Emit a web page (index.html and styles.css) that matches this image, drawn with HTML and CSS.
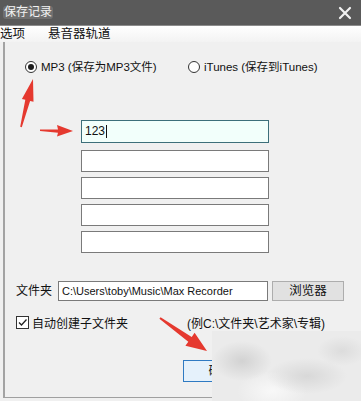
FILE: index.html
```html
<!DOCTYPE html>
<html>
<head>
<meta charset="utf-8">
<link rel="stylesheet" href="styles.css">
</head>
<body>
<div class="window">
  <div class="titlebar">
    <span class="title">保存记录</span>
    <svg class="close" width="14" height="14" viewBox="0 0 14 14"><path d="M2 2 L12 12 M12 2 L2 12" stroke="#f2f2f2" stroke-width="2.2" stroke-linecap="round"/></svg>
  </div>
  <div class="tabs"><span class="tab">选项</span><span class="tab second">悬音器轨道</span></div>
  <div class="main">
    <div class="radios">
      <label class="radio first"><span class="circle checked"></span>MP3 (保存为MP3文件)</label>
      <label class="radio"><span class="circle"></span>iTunes (保存到iTunes)</label>
    </div>
    <div class="fields">
      <div class="field focused">123<span class="caret"></span></div>
      <div class="field"></div>
      <div class="field"></div>
      <div class="field"></div>
      <div class="field"></div>
    </div>
    <div class="group">
      <div class="row folder">
        <span class="lbl">文件夹</span>
        <div class="path">C:\Users\toby\Music\Max Recorder</div>
        <div class="btn browse">浏览器</div>
      </div>
      <div class="row check">
        <span class="cb"><svg width="11" height="11" viewBox="0 0 11 11"><path d="M2 5.5 L4.5 8 L9.5 2.5" fill="none" stroke="#222" stroke-width="1.3"/></svg></span>
        <span class="cbtext">自动创建子文件夹</span>
        <span class="example">(例C:\文件夹\艺术家\专辑)</span>
      </div>
    </div>
    <div class="actions"><div class="btn ok">确定</div></div>
  </div>
  <svg class="arrows" width="361" height="401" viewBox="0 0 361 401">
    <polygon fill="#e5392f" points="33,79 33.5,101.7 30.1,100.9 21.8,127.2 20.2,126.8 25.3,99.7 21.9,98.9"/>
    <polygon fill="#e5392f" points="73,131 57,136.5 58,132.8 40,131 40,129.6 58,129.4 57,125"/>
    <polygon fill="#e5392f" points="207,351 185.4,345.8 188.3,341.7 159.4,318.8 160.6,317.2 191.7,336.9 194.6,332.8"/>
  </svg>
  <div class="watermark"></div>
</div>
</body>
</html>
```
FILE: styles.css
```css
html, body {
  margin: 0;
  padding: 0;
}
body {
  width: 361px;
  height: 401px;
  overflow: hidden;
  background: #f0f0f0;
  font-family: "Liberation Sans", "Noto Sans CJK SC", sans-serif;
  font-size: 12px;
  color: #111;
}
.window {
  position: relative;
  width: 361px;
  height: 401px;
  display: flex;
  flex-direction: column;
}
.titlebar {
  height: 25px;
  background: #5a5a5a;
  border-bottom: 1px solid #8c8c8c;
  display: flex;
  align-items: center;
  justify-content: space-between;
  padding: 0 9px 0 3px;
}
.title {
  color: #f2f2f2;
  font-size: 12px;
  line-height: 13px;
  padding: 0 1px;
  background: rgba(255,255,255,0.13);
  border-radius: 3px;
  margin-top: -1px;
}
.close {
  display: block;
}
.tabs {
  height: 16px;
  background: linear-gradient(#ffffff, #f3f3f3);
  display: flex;
  align-items: center;
  font-size: 12.5px;
  line-height: 14px;
}
.tab.second {
  margin-left: 23px;
}
.main {
  flex: 1;
  border-left: 2px solid #a3a3a3;
  margin-left: 3px;
  padding-left: 11px;
  border-bottom: 1px solid #a0a0a0;
  margin-bottom: 3px;
  display: flex;
  flex-direction: column;
}
.radios {
  display: flex;
  margin-top: 18px;
  padding-left: 9px;
  height: 14px;
  align-items: center;
  font-size: 11.5px;
}
.radio {
  display: flex;
  align-items: center;
  gap: 4px;
  line-height: 14px;
}
.radio.first {
  width: 163px;
}
.circle {
  width: 10px;
  height: 10px;
  border: 1px solid #333;
  border-radius: 50%;
  background: #fff;
  position: relative;
}
.circle.checked::after {
  content: "";
  position: absolute;
  left: 2px;
  top: 2px;
  width: 6px;
  height: 6px;
  border-radius: 50%;
  background: #1c1c1c;
}
.fields {
  margin-top: 46px;
  margin-left: 65px;
  display: flex;
  flex-direction: column;
  gap: 5px;
}
.field {
  width: 186px;
  height: 20px;
  border: 1px solid #7a7a7a;
  background: #fff;
  box-sizing: content-box;
}
.field.focused {
  height: 21px;
  margin-bottom: 2px;
  border-color: #3d6f7a;
  background: #f2fffb;
  padding-left: 3px;
  width: 183px;
  line-height: 21px;
  display: flex;
  align-items: center;
}
.caret {
  display: inline-block;
  width: 1px;
  height: 13px;
  background: #111;
  margin-left: 1px;
}
.group {
  margin-top: 28px;
  display: flex;
  flex-direction: column;
  gap: 13px;
}
.row {
  display: flex;
  align-items: center;
}
.folder {
  height: 20px;
}
.lbl {
  width: 42px;
  line-height: 14px;
}
.path {
  width: 205px;
  height: 18px;
  border: 1px solid #7a7a7a;
  background: #fff;
  padding-left: 3px;
  line-height: 18px;
  white-space: nowrap;
  overflow: hidden;
  font-size: 11px;
}
.btn {
  border: 1px solid #adadad;
  background: #e1e1e1;
  text-align: center;
  line-height: 18px;
  height: 18px;
}
.browse {
  margin-left: 4px;
  width: 70px;
  font-size: 12.5px;
}
.check {
  height: 16px;
}
.cb {
  width: 11px;
  height: 11px;
  border: 1px solid #333;
  background: #fff;
  display: flex;
}
.cbtext {
  margin-left: 3px;
  width: 155px;
  font-size: 12px;
}
.example {
  font-size: 12px;
}
.actions {
  margin-top: 30px;
  padding-left: 167px;
}
.ok {
  width: 73px;
  height: 20px;
  line-height: 20px;
  border: 1px solid #2f7ac2;
  background: #e5f1fb;
}
.arrows {
  position: absolute;
  left: 0;
  top: 0;
  pointer-events: none;
}
.watermark {
  position: absolute;
  left: 212px;
  top: 331px;
  width: 149px;
  height: 70px;
  background:
    radial-gradient(ellipse 30px 20px at 30px 30px, #d2d2d2, transparent),
    radial-gradient(ellipse 40px 18px at 95px 45px, #d8d8d8, transparent),
    radial-gradient(ellipse 25px 15px at 130px 20px, #dcdcdc, transparent),
    radial-gradient(ellipse 35px 20px at 60px 60px, #f8f8f8, transparent),
    #ebebeb;
}
```
